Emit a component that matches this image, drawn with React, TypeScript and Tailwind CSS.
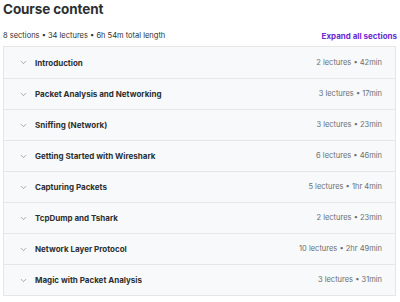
import { ChevronDown } from 'lucide-react';

const sections = [
  { title: 'Introduction', meta: '2 lectures • 42min' },
  { title: 'Packet Analysis and Networking', meta: '3 lectures • 17min' },
  { title: 'Sniffing (Network)', meta: '3 lectures • 23min' },
  { title: 'Getting Started with Wireshark', meta: '6 lectures • 46min' },
  { title: 'Capturing Packets', meta: '5 lectures • 1hr 4min' },
  { title: 'TcpDump and Tshark', meta: '2 lectures • 23min' },
  { title: 'Network Layer Protocol', meta: '10 lectures • 2hr 49min' },
  { title: 'Magic with Packet Analysis', meta: '3 lectures • 31min' },
];

export default function App() {
  return (
    <div className="w-[400px] h-[302px] bg-white px-[3px] pt-0 font-['Inter',sans-serif] text-[#2d2f31] overflow-hidden">
      <p className="text-[13.5px] font-bold leading-[18px] tracking-[-0.1px]">
        Course content
      </p>
      <div className="flex flex-row justify-between items-end mt-[10px] h-[13px]">
        <p className="text-[7.5px] text-[#2d2f31] leading-[10px]">
          8 sections • 34 lectures • 6h 54m total length
        </p>
        <p className="text-[8px] font-bold text-[#6d28d2] leading-[10px]">
          Expand all sections
        </p>
      </div>
      <div className="mt-[5px] border border-[#e4e6e8] w-[393px]">
        {sections.map((s, i) => (
          <div
            key={s.title}
            className={`flex flex-row items-center justify-between h-[31px] bg-[#f7f9fa] pl-[15px] pr-[13px] ${
              i > 0 ? 'border-t border-[#e4e6e8]' : ''
            }`}
          >
            <div className="flex flex-row items-center gap-[7px]">
              <ChevronDown size={9} strokeWidth={1.5} className="text-[#6a6f73]" />
              <span className="text-[8px] font-bold">{s.title}</span>
            </div>
            <span className="text-[7.5px] text-[#6a6f73]">{s.meta}</span>
          </div>
        ))}
      </div>
    </div>
  );
}
